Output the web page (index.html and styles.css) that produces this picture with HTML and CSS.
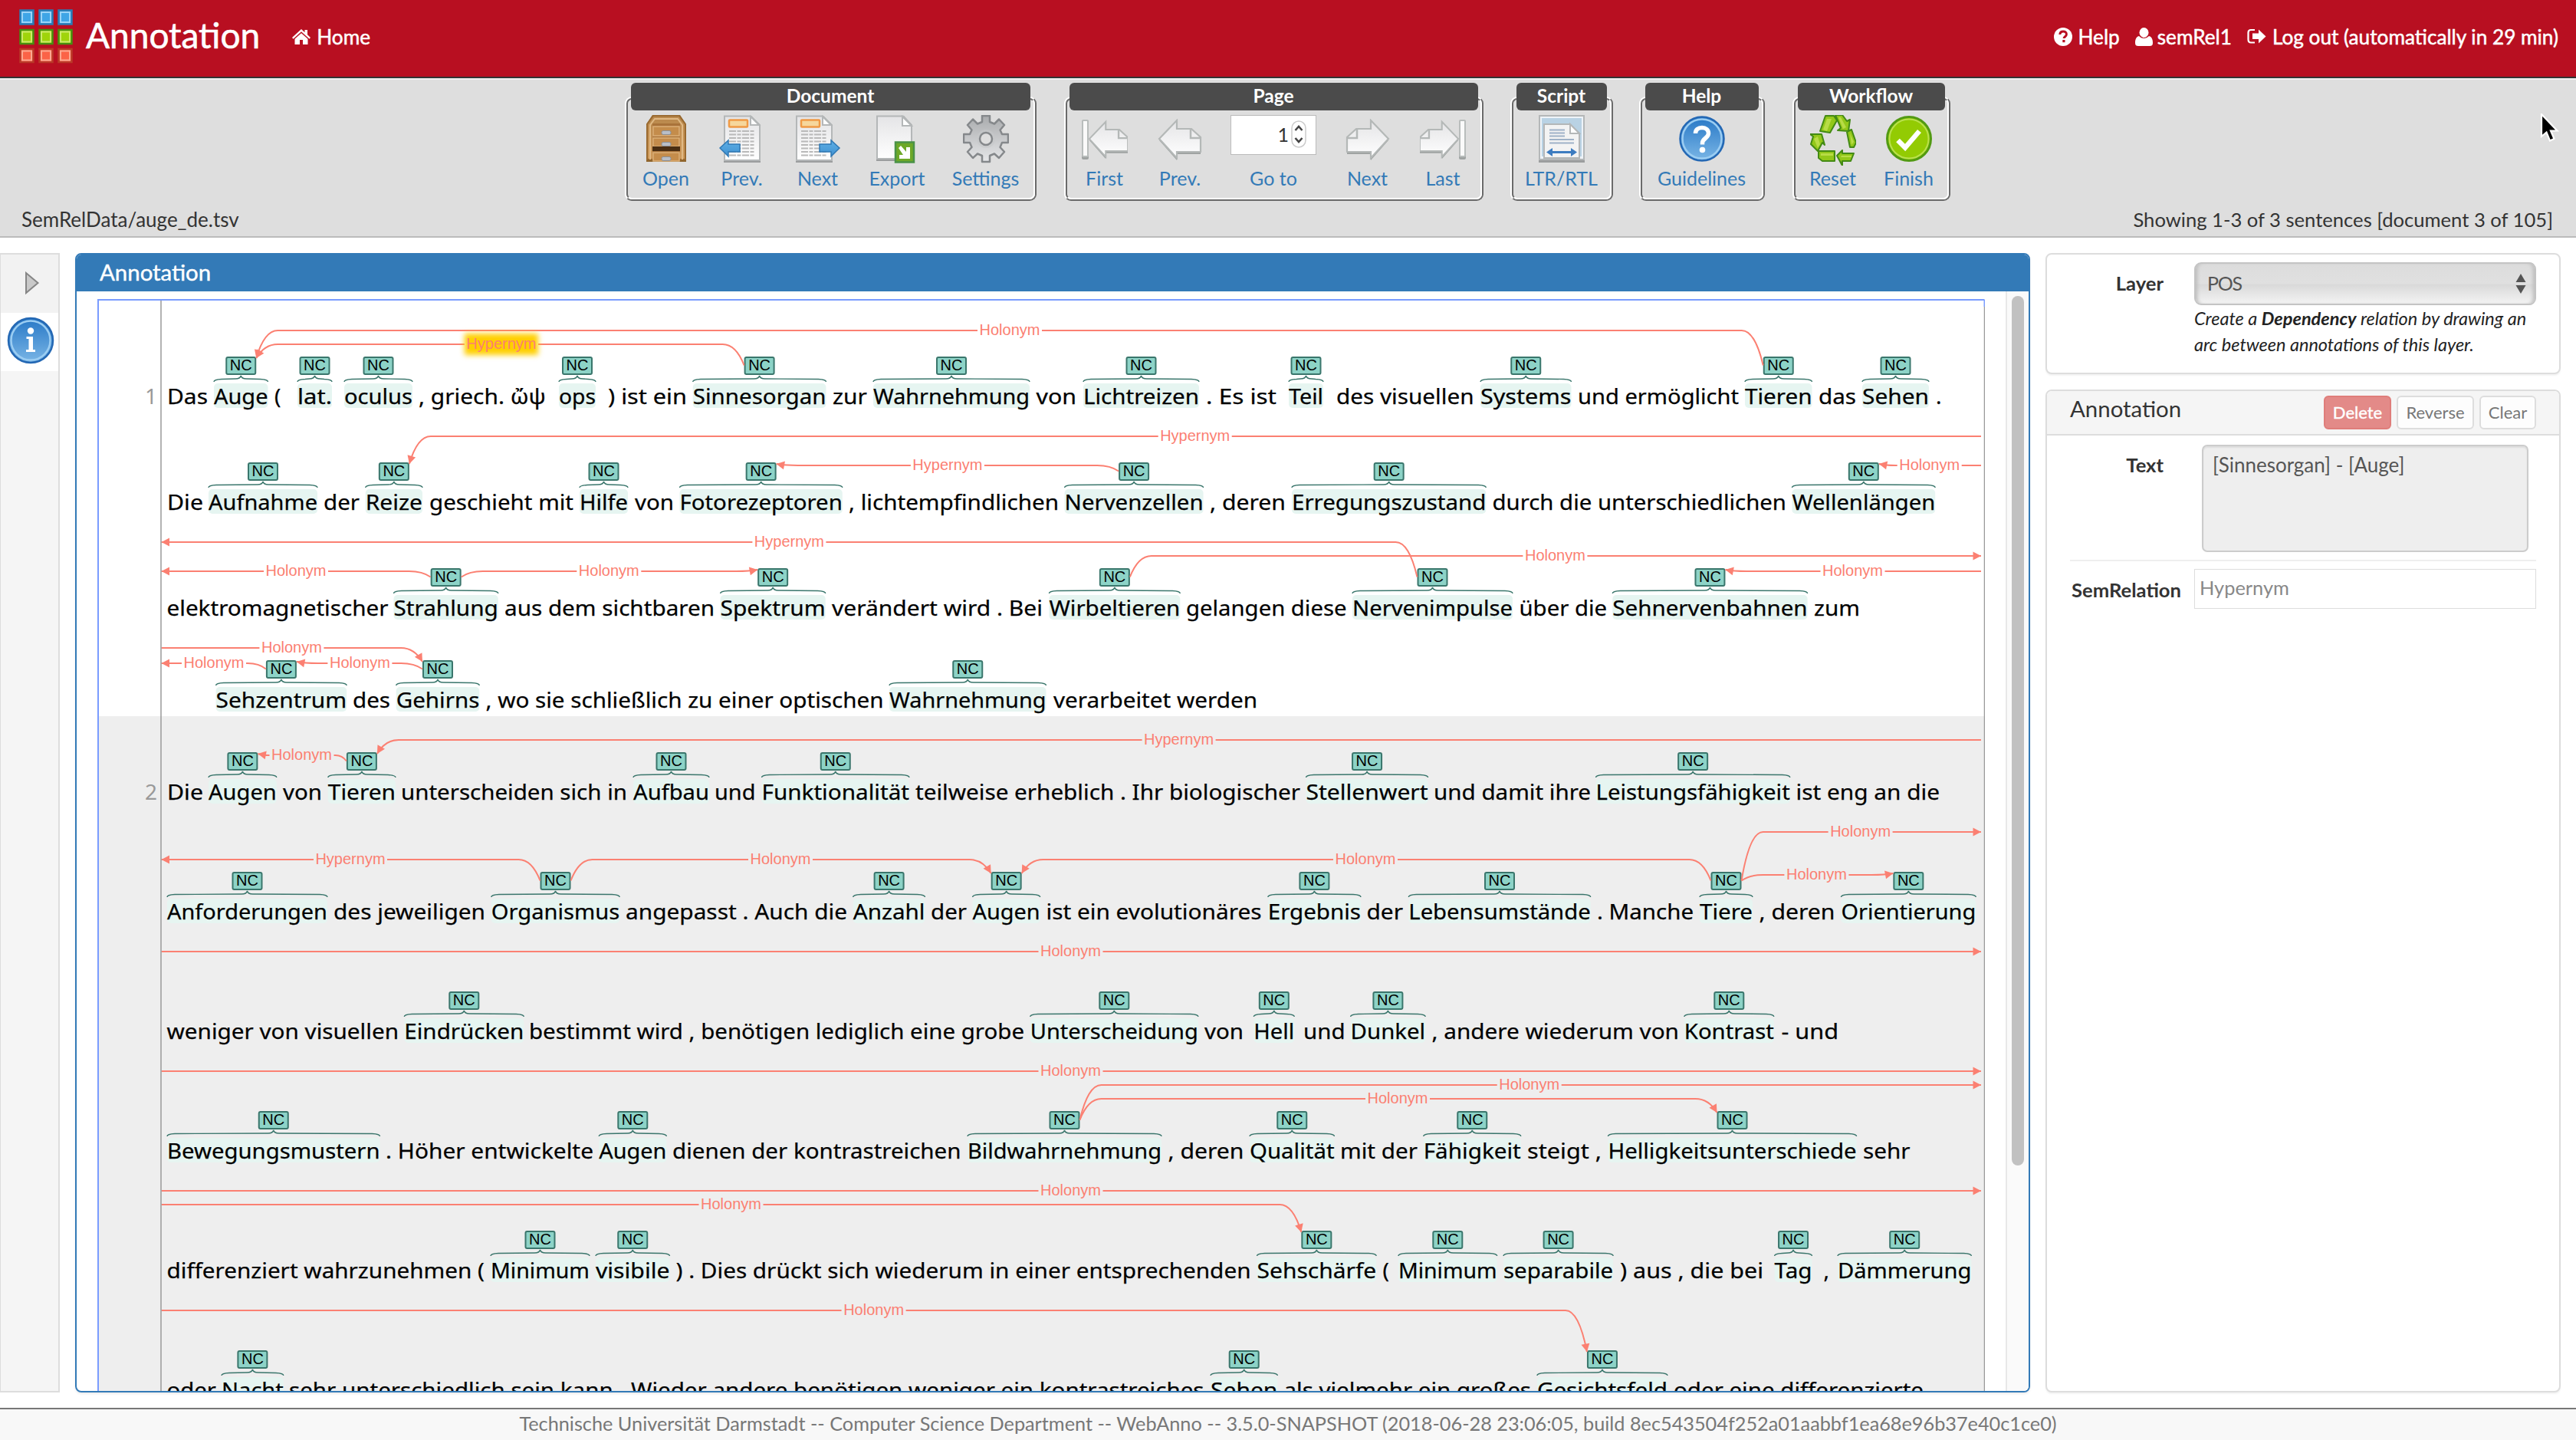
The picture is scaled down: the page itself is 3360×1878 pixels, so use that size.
FILE: index.html
```html
<!DOCTYPE html>
<html lang="en">
<head>
<meta charset="utf-8">
<title>WebAnno - Annotation</title>
<link rel="stylesheet" href="styles.css">
</head>
<body>
<svg class="defs" width="0" height="0" aria-hidden="true">
  <defs>
    <linearGradient id="gBlue" x1="0" y1="0" x2="0" y2="1"><stop offset="0" stop-color="#2878c6"/><stop offset="1" stop-color="#7ab6e6"/></linearGradient>
    <linearGradient id="gWood" x1="0" y1="0" x2="0" y2="1"><stop offset="0" stop-color="#b9884c"/><stop offset="1" stop-color="#cf9a5a"/></linearGradient>
    <linearGradient id="gPaper" x1="0" y1="0" x2="0" y2="1"><stop offset="0" stop-color="#e4e4e6"/><stop offset="1" stop-color="#ffffff"/></linearGradient>
    <linearGradient id="gGear" x1="0" y1="0" x2="0" y2="1"><stop offset="0" stop-color="#a9abad"/><stop offset="1" stop-color="#e6e7e9"/></linearGradient>
    <linearGradient id="gArrow" x1="0" y1="0" x2="0" y2="1"><stop offset="0" stop-color="#5fb0e6"/><stop offset="1" stop-color="#3f90d0"/></linearGradient>
    <symbol id="docText" viewBox="0 0 60 66">
      <path d="M6 62V1h36l12 12v49z" fill="#9b9d9e"/>
      <path d="M7 59V1.500h34l12 12V59z" fill="url(#gPaper)" stroke="#b4b7b8" stroke-width="2"/>
      <path d="M41 2v11h11z" fill="#fff" stroke="#b4b7b8" stroke-width="2"/>
      <rect x="13" y="6.500" width="24" height="9" rx="1" fill="#f6d79c" stroke="#f09a45" stroke-width="2.500"/>
      <path d="M13 21h34M13 25.500h34M13 30h34M13 34.500h34M13 39h34M13 43.500h34M13 48h34M13 52.500h34" stroke="#b9b9b9" stroke-width="2" stroke-dasharray="9 1.500 5 1.500"/>
    </symbol>
    <symbol id="pageArrow" viewBox="0 0 58 56">
      <path d="M2 28L25 3V14H44L56 26V46H25V54z" fill="#9fa3a2"/>
      <path d="M2 26L25 2V13H44L56 24V43H25V51z" fill="url(#gPaper)" stroke="#b4b8b7" stroke-width="2.200"/>
      <path d="M43 14V25H55" fill="none" stroke="#b4b8b7" stroke-width="2.500"/>
    </symbol>
  </defs>
</svg>

<header class="topbar">
  <div class="brand">
    <svg class="logo" viewBox="0 0 70 72" width="70" height="72">
      <g stroke-width="2.500">
        <g fill="#3fa5e6" stroke="#2a7cb5"><rect x="1.500" y="1.500" width="17" height="18"/><rect x="26.500" y="1.500" width="17" height="18"/><rect x="51.500" y="1.500" width="17" height="18"/></g>
        <g fill="#9fd40a" stroke="#478f10"><rect x="1.500" y="27" width="17" height="18"/><rect x="26.500" y="27" width="17" height="18"/><rect x="51.500" y="27" width="17" height="18"/></g>
        <g fill="#fb6347" stroke="#b93a28"><rect x="1.500" y="52" width="17" height="17"/><rect x="26.500" y="52" width="17" height="17"/><rect x="51.500" y="52" width="17" height="17"/></g>
      </g>
      <g fill="none" stroke-width="2">
        <g stroke="#9bd4f7"><rect x="4" y="4" width="12" height="13"/><rect x="29" y="4" width="12" height="13"/><rect x="54" y="4" width="12" height="13"/></g>
        <g stroke="#cdea6a"><rect x="4" y="29.500" width="12" height="13"/><rect x="29" y="29.500" width="12" height="13"/><rect x="54" y="29.500" width="12" height="13"/></g>
        <g stroke="#fca890"><rect x="4" y="54.500" width="12" height="12"/><rect x="29" y="54.500" width="12" height="12"/><rect x="54" y="54.500" width="12" height="12"/></g>
      </g>
    </svg>
    <h1 class="brand-title">Annotation</h1>
    <a class="nav home"><svg viewBox="0 0 26 22" width="26" height="22"><path d="M13 1L1 12l1.500 1.700L13 4.200l10.500 9.500L25 12l-4-3.700V2h-3.500v3.200z" fill="#fff"/><path d="M13 6.200L4.500 13.800V21H11v-6h4v6h6.500v-7.200z" fill="#fff"/></svg><span>Home</span></a>
  </div>
  <nav class="account">
    <a class="nav"><svg viewBox="0 0 24 24" width="24" height="24"><circle cx="12" cy="12" r="12" fill="#fff"/><path d="M7.800 9C8 6.200 10 5 12.200 5c2.300 0 4.200 1.400 4.200 3.700 0 3-3.300 3-3.300 5.300" fill="none" stroke="#b80f21" stroke-width="3"/><rect x="11.300" y="16" width="3.200" height="3.200" fill="#b80f21"/></svg><span>Help</span></a>
    <a class="nav nav-user"><svg viewBox="0 0 23 24" width="23" height="24"><ellipse cx="11.500" cy="6.500" rx="6" ry="6.500" fill="#fff"/><path d="M5 11c-4 1-5 5-5 9 0 3 1.500 4 4 4h15c2.500 0 4-1 4-4 0-4-1-8-5-9-4 4-9 4-13 0z" fill="#fff"/></svg><span>semRel1</span></a>
    <a class="nav nav-out"><svg viewBox="0 0 25 22" width="25" height="22"><path d="M10 2H5Q1.500 2 1.500 5.500v9Q1.500 18.500 5 18.500h5" fill="none" stroke="#fff" stroke-width="2.200"/><path d="M7 6.500h8V1.500l9.500 9-9.500 9V14H7z" fill="#fff"/></svg><span>Log out (automatically in 29 min)</span></a>
  </nav>
</header>

<section class="toolbar">
  <div class="groups">
    <div class="group g-doc"><div class="legend">Document</div><div class="items">
      <a class="item i98"><svg class="ico" viewBox="0 0 60 66"><path d="M4 61V12L12 0H48L56 12V61z" fill="#8f642c"/><path d="M5 58V12L13 1H47L55 12V58z" fill="url(#gWood)" stroke="#9a6a30" stroke-width="2"/><path d="M9 58V13L15 5H45L51 13V58" fill="none" stroke="#e0b985" stroke-width="2"/><path d="M12 11h36v47H12z" fill="#a9733a"/><path d="M13 15h34v12H13zM13 30h34v11H13zM13 49h34v11H13z" fill="#c48c4b" stroke="#dcb078" stroke-width="1.500"/><path d="M12 41h36v6H12z" fill="#4a2e12"/><g fill="#b9bec6" stroke="#8c8f94"><rect x="24" y="20.500" width="12" height="5" rx="2"/><rect x="24" y="35.500" width="12" height="5" rx="2"/><rect x="24" y="54.500" width="12" height="5" rx="2"/></g></svg><span>Open</span></a>
      <a class="item i100"><svg class="ico" viewBox="0 0 60 66"><use href="#docText" width="60" height="66"/><path d="M1 43L12 33v5H27v10H12v6z" fill="url(#gArrow)" stroke="#2f78b4" stroke-width="1.500"/></svg><span>Prev.</span></a>
      <a class="item i98"><svg class="ico" viewBox="0 0 60 66"><use href="#docText" x="-5" width="60" height="66"/><path d="M58 43L47 33v5H32v10H47v6z" fill="url(#gArrow)" stroke="#2f78b4" stroke-width="1.500"/></svg><span>Next</span></a>
      <a class="item i109"><svg class="ico" viewBox="0 0 60 66"><path d="M3 60V1h36l11 12v47z" fill="#9b9d9e"/><path d="M4 57V1.500h34l11 12V57z" fill="url(#gPaper)" stroke="#b4b7b8" stroke-width="2"/><path d="M37 2v12h12z" fill="#fff" stroke="#b4b7b8" stroke-width="2"/><rect x="28" y="35.500" width="24" height="26" fill="#6da828" stroke="#4a9247" stroke-width="2.500"/><path d="M32 43l3-3 7 8v-6h5v15H33v-5h5z" fill="#fff"/></svg><span>Export</span></a>
      <a class="item i122"><svg class="ico" viewBox="0 0 60 66"><g transform="translate(30 31)"><path d="M-5-30H5V-22L11-19.500 17-25.500 24-18 18.500-11.500 21-6H29V5H21L18.500 11 24 17 17 25 11 19.500 5 22V30H-5V22L-11 19.500-17 25-24 17-18.500 11-21 5H-29V-6H-21L-18.500-11.500-24-18-17-25.500-11-19.500-5-22z" fill="url(#gGear)" stroke="#85888b" stroke-width="2.500" stroke-linejoin="round"/><circle r="12" fill="#c6c8ca" opacity=".6"/><circle r="8" fill="#dedede" stroke="#85888b" stroke-width="2.500"/></g></svg><span>Settings</span></a>
    </div></div>
    <div class="group g-page"><div class="legend">Page</div><div class="items">
      <a class="item i97"><svg class="ico" viewBox="0 0 60 66"><rect x="0" y="7" width="9" height="51" rx="2" fill="#9fa3a2"/><rect x="1" y="7" width="7" height="47" rx="1" fill="#fafafa" stroke="#b9bdbc" stroke-width="2"/><use href="#pageArrow" x="8" y="5" width="54" height="56"/></svg><span>First</span></a>
      <a class="item i100"><svg class="ico" viewBox="0 0 60 66"><use href="#pageArrow" x="1" y="5" width="58" height="56"/></svg><span>Prev.</span></a>
      <div class="item i144"><div class="ico-slot"><div class="goto"><span>1</span><svg viewBox="0 0 20 36" width="20" height="36"><rect x="1" y="1" width="18" height="34" rx="9" fill="#fff" stroke="#ccc" stroke-width="1.500"/><path d="M5.500 13l4.500-5 4.500 5M5.500 23l4.500 5 4.500-5" fill="none" stroke="#444" stroke-width="2.600"/></svg></div></div><span>Go to</span></div>
      <a class="item i101"><svg class="ico" viewBox="0 0 60 66"><g transform="translate(59 5) scale(-1 1)"><use href="#pageArrow" width="58" height="56"/></g></svg><span>Next</span></a>
      <a class="item i96"><svg class="ico" viewBox="0 0 60 66"><rect x="51" y="7" width="9" height="51" rx="2" fill="#9fa3a2"/><rect x="52" y="7" width="7" height="47" rx="1" fill="#fafafa" stroke="#b9bdbc" stroke-width="2"/><g transform="translate(52 5) scale(-1 1)"><use href="#pageArrow" width="54" height="56"/></g></svg><span>Last</span></a>
    </div></div>
    <div class="group g-script"><div class="legend">Script</div><div class="items">
      <a class="item i126"><svg class="ico" viewBox="0 0 60 66"><rect x="0" y="1" width="60" height="61" fill="#9b9d9e"/><rect x="1" y="1" width="58" height="57" fill="#eef3f8" stroke="#b4b7b8" stroke-width="2"/><path d="M4 4h52v50H4z" fill="#b9d2e4"/><path d="M7 56V12h34l12 12v32z" fill="#f3f3f3" stroke="#b4b7b8" stroke-width="2"/><path d="M41 12v12h12z" fill="#fff" stroke="#b4b7b8" stroke-width="2"/><path d="M14 19.500h20M14 23.500h20M14 27.500h20M14 32h32M14 36.500h32" stroke="#9fb2c8" stroke-width="2"/><path d="M14 48.500h32" stroke="#3d7cc0" stroke-width="3"/><path d="M10 48.500l8-5.500v11zM50 48.500l-8-5.500v11z" fill="#3d7cc0"/></svg><span>LTR/RTL</span></a>
    </div></div>
    <div class="group g-help"><div class="legend">Help</div><div class="items">
      <a class="item i156"><svg class="ico" viewBox="0 0 60 66"><circle cx="30" cy="31" r="28.500" fill="url(#gBlue)" stroke="#2468b4" stroke-width="2.500"/><circle cx="30" cy="31" r="25.500" fill="none" stroke="#9bcdf2" stroke-width="2.500"/><path d="M21.500 24c0-5 3.500-7.500 8.500-7.500s8.500 3 8.500 7.500c0 6-8 6.500-8 12.500v2" fill="none" stroke="#fff" stroke-width="5.500"/><circle cx="30.500" cy="45.500" r="3.800" fill="#fff"/></svg><span>Guidelines</span></a>
    </div></div>
    <div class="group g-flow"><div class="legend">Workflow</div><div class="items">
      <a class="item i98"><svg class="ico" viewBox="0 0 60 66"><g transform="translate(30 33)"><path d="M-17-12L-10-32H1L5-26-4-10zM3-33H12L18-25 22-27 20-12 6-13 10-16zM18-11L24-14 30 3 27 9 22 9zM-30-8H-15L-11 6-14 3-20 14-29 5-26-5zM-19 14H2V27H-14L-19 23zM5 20L12 13V17H27L23 27H12V33z" fill="#93c81a" stroke="#438a14" stroke-width="2" stroke-linejoin="round"/><path d="M-13-14L-8-28H-2L-8-12zM7-30H10L17-17 13-15zM22-9L27 2 24 6zM-25-2L-20-5-17 5-20 10zM-16 17H0V20H-16zM11 20H24V22H10z" fill="#c4e356" opacity=".75"/></g></svg><span>Reset</span></a>
      <a class="item i100"><svg class="ico" viewBox="0 0 60 66"><circle cx="30" cy="31" r="28.500" fill="#93cb03" stroke="#529a12" stroke-width="3"/><circle cx="30" cy="31" r="25.500" fill="none" stroke="#b9e04e" stroke-width="2"/><path d="M15.500 33l9.500 9.500L43.500 21" fill="none" stroke="#fff" stroke-width="6.500"/></svg><span>Finish</span></a>
    </div></div>
  </div>
  <div class="status"><span class="t-doc">SemRelData/auge_de.tsv</span><span class="t-show">Showing 1-3 of 3 sentences [document 3 of 105]</span></div>
  <svg class="cursor" viewBox="0 0 26 38" width="26" height="38"><path d="M2 1V30L8.500 24.500 13 35.500 18.500 33 14 22.500H22.500z" fill="#000" stroke="#fff" stroke-width="2.200"/></svg>
</section>

<main class="work">
  <aside class="rail">
    <div class="rail-cell rail-toggle"><svg viewBox="0 0 20 32" width="20" height="32"><path d="M2 2L17.500 15 2 28z" fill="#c9c9c9" stroke="#868686" stroke-width="2"/></svg></div>
    <div class="rail-cell rail-info"><svg viewBox="0 0 62 62" width="62" height="62"><circle cx="31" cy="31" r="29" fill="url(#gBlue)" stroke="#2468b4" stroke-width="2.500"/><circle cx="31" cy="31" r="25.500" fill="none" stroke="#9bcdf2" stroke-width="2.500"/><circle cx="31" cy="18.500" r="4.200" fill="#fff"/><path d="M25.500 26H34V43h3v3H25v-3h3.500V29h-3z" fill="#fff"/></svg></div>
  </aside>
  <section class="panel-main">
    <h2 class="panel-title">Annotation</h2>
    <div class="scroll">
      <svg class="doc" id="doc" viewBox="127 390 2462 1424" width="2462" height="1424"></svg>
      <div class="track"><div class="thumb"></div></div>
    </div>
  </section>
  <aside class="side">
    <section class="card layer">
      <label class="lbl">Layer</label>
      <div class="layer-body">
        <div class="select"><span class="value">POS</span><svg viewBox="0 0 14 26" width="14" height="26"><path d="M7 0l6.500 11H.5zM7 26l6.500-11H.5z" fill="#555"/></svg></div>
        <p class="hint">Create a <b>Dependency</b> relation by drawing an<br>arc between annotations of this layer.</p>
      </div>
    </section>
    <section class="card detail">
      <div class="detail-head"><h3>Annotation</h3><div class="btns"><button class="btn danger">Delete</button><button class="btn rev">Reverse</button><button class="btn clr">Clear</button></div></div>
      <div class="detail-row"><label class="lbl">Text</label><div class="area">[Sinnesorgan] - [Auge]</div></div>
      <hr class="rule">
      <div class="detail-row rel"><label class="lbl">SemRelation</label><div class="field">Hypernym</div></div>
    </section>
  </aside>
</main>

<footer class="foot"><span>Technische Universität Darmstadt -- Computer Science Department -- WebAnno -- 3.5.0-SNAPSHOT (2018-06-28 23:06:05, build 8ec543504f252a01aabbf1ea68e96b37e40c1ce0)</span></footer>
<script src="doc.js"></script>
</body>
</html>
```
FILE: styles.css
```css
* { box-sizing: border-box; }
html, body { margin: 0; height: 1878px; overflow: hidden; }
body { width: 3360px; background: #fff; color: #333; font-family: Lato, "Open Sans", sans-serif; font-size: 25px; display: flex; flex-direction: column; position: relative; }
h1, h2, h3, p { margin: 0; font-weight: 400; }
svg { display: block; flex: none; }
span { white-space: nowrap; }
.defs { position: absolute; }

.topbar { height: 102px; flex: none; background: #b80f21; border-bottom: 2px solid #333; display: flex; justify-content: space-between; color: #fff; padding: 0 23px 0 25px; }
.brand, .account { display: flex; align-items: center; height: 96px; }
.brand-title { font-size: 46px; margin: 0 0 4px 17px; line-height: 60px; -webkit-text-stroke: .6px #fff; }
.nav { display: flex; align-items: center; gap: 7px; line-height: 32px; font-size: 26.200px; -webkit-text-stroke: .5px #fff; }
.home { margin-left: 41px; }
.nav-user { margin-left: 20px; gap: 6px; }
.nav-out { margin-left: 20px; gap: 8px; }

.toolbar { height: 208px; flex: none; background: #dedede; border-top: 2px solid #f0f0f0; border-bottom: 2px solid #bbb; position: relative; display: flex; flex-direction: column; align-items: center; }
.groups { display: flex; justify-content: center; padding: 4px 2px 0 0; height: 164px; }
.group { height: 154px; position: relative; display: flex; flex-direction: column; align-items: center; }
.group::before { content: ""; position: absolute; inset: 18px 0 0 0; border-radius: 9px; border: 2px solid; border-color: #fff #6a6a6a #6a6a6a #fff; }
.group::after { content: ""; position: absolute; inset: 20px 2px 2px 2px; border-radius: 7px; border: 2px solid; border-color: #6a6a6a #fff #fff #6a6a6a; }
.legend { position: relative; z-index: 1; height: 36px; flex: none; border-radius: 6px; background: #4b4b4b; color: #fff; font-weight: 700; font-size: 24.500px; line-height: 34px; text-align: center; }
.g-doc { width: 537px; margin-right: 36px; }
.g-doc .legend { width: 521px; }
.g-page { width: 547px; margin-right: 35px; }
.g-page .legend { width: 533px; }
.g-script { width: 134px; margin-right: 34px; }
.g-script .legend { width: 118px; }
.g-help { width: 164px; margin-right: 36px; }
.g-help .legend { width: 148px; }
.g-flow { width: 206px; }
.g-flow .legend { width: 192px; }
.items { display: flex; padding: 6px 0 0; justify-content: center; }
.item { display: flex; flex-direction: column; align-items: center; color: #337ab7; line-height: 36px; position: relative; z-index: 1; }
.ico { width: 60px; height: 66px; margin-bottom: -2px; }
.ico-slot { height: 64px; }
.i96 { width: 96px; } .i97 { width: 97px; } .i98 { width: 98px; } .i100 { width: 100px; } .i101 { width: 101px; }
.i109 { width: 109px; } .i122 { width: 122px; } .i126 { width: 126px; } .i144 { width: 144px; } .i156 { width: 156px; }
.goto { width: 112px; height: 52px; border: 1px solid #bbb; background: #fff; display: flex; justify-content: flex-end; align-items: center; gap: 3px; padding: 0 12px 2px 0; color: #333; }
.status { width: 100%; display: flex; justify-content: space-between; padding: 0 30px 0 28px; line-height: 36px; }
.t-doc { font-size: 26px; }
.t-show { font-size: 25.600px; }
.cursor { position: absolute; left: 3313px; top: 44px; }

.work { height: 1506px; flex: none; display: flex; padding-top: 20px; }
.rail { width: 78px; height: 1486px; border: 2px solid #ddd; border-left-width: 1px; background: #f5f5f5; margin-right: 20px; flex: none; }
.rail-cell { display: flex; align-items: center; justify-content: center; height: 76px; }
.rail-toggle { background: #f2f2f2; padding-left: 6px; }
.rail-info { background: #fff; padding: 0 0 4px 2px; }
.panel-main { width: 2550px; height: 1486px; border: 2px solid #337ab7; border-radius: 8px; flex: none; overflow: hidden; box-shadow: 0 2px 3px rgba(0,0,0,.08); }
.panel-title { height: 48px; background: #337ab7; color: #fff; font-size: 29.400px; line-height: 46px; padding-left: 30px; -webkit-text-stroke: .4px #fff; }
.scroll { height: 1434px; display: flex; justify-content: space-between; padding-left: 27px; }
.doc { margin-top: 10px; }
.track { width: 30px; border-left: 2px solid #e8e8e8; background: #fafafa; padding: 6px 0 0 6px; }
.thumb { width: 16px; height: 1134px; border-radius: 8px; background: #c1c1c1; }

.side { width: 672px; margin-left: 20px; display: flex; flex-direction: column; gap: 20px; }
.card { border: 2px solid #ddd; border-radius: 8px; background: #fff; box-shadow: 0 2px 2px rgba(0,0,0,.05); }
.layer { height: 158px; display: flex; padding: 10px 30px 0 30px; }
.lbl { font-weight: 700; font-size: 25.600px; text-align: right; white-space: nowrap; }
.layer .lbl { width: 122px; line-height: 54px; }
.layer-body { margin-left: 40px; width: 446px; flex: none; }
.select { height: 56px; border: 2px solid #c4c4c4; border-radius: 9px; background: linear-gradient(#dcdcdc, #e0e0e0 50%, #d9d9d9 52%, #f3f3f3); box-shadow: inset 5px 0 5px -3px #bbb, inset -5px 0 5px -3px #bbb; display: flex; align-items: center; justify-content: space-between; padding: 0 11px 0 15px; color: #555; line-height: 32px; }
.value { letter-spacing: -1.300px; padding-bottom: 3px; }
.hint { font-style: italic; font-size: 23.500px; line-height: 34px; color: #222; white-space: nowrap; }
.detail { height: 1308px; overflow: hidden; }
.detail-head { height: 58px; background: #f5f5f5; border-bottom: 2px solid #ddd; display: flex; justify-content: space-between; padding: 6px 30px 0 30px; }
.detail-head h3 { font-size: 29.400px; line-height: 40px; margin-top: -3px; }
.btns { display: flex; gap: 7px; }
.btn { height: 44px; border: 2px solid #ddd; border-radius: 6px; background: #fdfdfd; color: #777; font: 22px Lato, sans-serif; padding: 0 0 2px; text-align: center; }
.danger { width: 88px; background: #e38a88; border-color: #df7d7a; color: #fff; -webkit-text-stroke: .4px #fff; }
.rev { width: 101px; }
.clr { width: 74px; }
.detail-row { display: flex; padding: 12px 30px 0; }
.detail-row .lbl { width: 122px; line-height: 52px; }
.area { margin-left: 50px; width: 426px; height: 140px; border: 2px solid #ccc; border-radius: 7px; background: #eee; box-shadow: inset 0 2px 2px rgba(0,0,0,.07); color: #555; padding: 0 12px; font-size: 26px; line-height: 49px; }
.rule { margin: 10px 30px 0; border: 0; height: 2px; background: #eee; }
.rel { padding-top: 10px; }
.detail-row.rel .lbl { width: 145px; line-height: 54px; }
.field { margin-left: 17px; width: 446px; height: 52px; border: 1px solid #ddd; color: #888; font-size: 25.400px; line-height: 47px; padding-left: 6px; }

.foot { margin-top: 20px; height: 42px; flex: none; border-top: 2px solid #777; background: #f8f8f8; color: #777; text-align: center; font-size: 25.270px; line-height: 36px; }

.word { font: 28px "Noto Sans", "Open Sans", sans-serif; fill: #000; stroke: #000; stroke-width: .25; }
.num { font: 28px "Noto Sans", "Open Sans", sans-serif; fill: #999; }
.mark { fill: #e6f5f1; }
.brace { fill: none; stroke: #3a766c; stroke-width: 1.4; }
.tag { fill: #8dd3c7; stroke: #3a766c; stroke-width: 2; }
.tag-text { font: 20px "Liberation Sans", Arial, sans-serif; fill: #000; text-anchor: middle; }
.arc { fill: none; stroke: #fb8072; stroke-width: 2; }
.head { fill: #fb8072; }
.arc-text { font: 20px "Liberation Sans", Arial, sans-serif; fill: #fb8072; text-anchor: middle; }
```
FILE: doc.js
```js
// Rows of the document. Runs are [text, start, end, annotated]; arcs are
// [label, height, label centre, from, to], where an end is [span index, side]
// or the name of the edge at which the arc leaves the row.
const LEFT = 210.5, RIGHT = 2584;
const rows = [
  { base: 526, bottom: 538, num: "1", runs: [
    ["Das",218,271],["Auge",279,349.5,1],["(",358,368],["lat.",388,433,1],["oculus",449,538,1],[", griech. ὤψ",546,712],["ops",729,777,1],[") ist ein",793,896],["Sinnesorgan",903.7,1077.5,1],["zur",1086,1131],["Wahrnehmung",1139,1343,1],["von",1351.500,1404],["Lichtreizen",1413,1564,1],[". Es ist",1573,1665],["Teil",1681,1726,1],["des visuellen",1743,1922.5],["Systems",1931,2049.5,1],["und ermöglicht",2058,2268],["Tieren",2276,2363.5,1],["das",2372,2421],["Sehen",2429,2516,1],[".",2525,2532]],
    arcs: [["Holonym",431,1317,[9,"l"],[0,"r"]],["Hypernym",449,653.900,[4,"l"],[0,"r"],1]] },
  { base: 664, bottom: 676, runs: [
    ["Die",218,265],["Aufnahme",272,414,1],["der",422,469],["Reize",476.7,551,1],["geschieht mit",560,748],["Hilfe",756,819,1],["von",828,879],["Fotorezeptoren",886.5,1098.8,1],[", lichtempfindlichen",1107,1381],["Nervenzellen",1388.6,1569.6,1],[", deren",1578,1677],["Erregungszustand",1685,1938.3,1],["durch die unterschiedlichen",1946.5,2330],["Wellenlängen",2337.4,2524.2,1]],
    arcs: [["Hypernym",569,1558.7,"R",[1,"r"]],["Hypernym",607,1235.9,[4,"l"],[3,"r"]],["Holonym",607,2516.7,"R",[6,"r"]]] },
  { base: 802, bottom: 814, runs: [
    ["elektromagnetischer",217.5,506.5],["Strahlung",513.5,649.8,1],["aus dem sichtbaren",658,932],["Spektrum",939.6,1076.7,1],["verändert wird . Bei",1085,1360],["Wirbeltieren",1368.4,1539.3,1],["gelangen diese",1547,1756.5],["Nervenimpulse",1764,1973,1],["über die",1981.5,2096],["Sehnervenbahnen",2103.3,2357.6,1],["zum",2366,2426]],
    arcs: [["Hypernym",707,1029.4,[3,"l"],"L"],["Holonym",725,2028.4,[2,"r"],"R"],["Holonym",745,386,[0,"l"],"L"],["Holonym",745,794.3,[0,"r"],[1,"l"]],["Holonym",745,2416.5,"R",[4,"r"]]] },
  { base: 922, bottom: 934, runs: [
    ["Sehzentrum",281.6,452.2,1],["des",460,509],["Gehirns",516.7,625.3,1],[", wo sie schließlich zu einer optischen",633.5,1152.5],["Wahrnehmung",1160,1364.5,1],["verarbeitet werden",1374,1640]],
    arcs: [["Holonym",845,380.4,"L",[1,"l"]],["Holonym",865,279,[0,"l"],"L"],["Holonym",865,469.4,[1,"l"],[0,"r"]]] },
  { base: 1042, bottom: 1054, shade: 1, num: "2", runs: [
    ["Die",218,265],["Augen",272,360.8,1],["von",369,420],["Tieren",427.8,516,1],["unterscheiden sich in",523,818],["Aufbau",826,925,1],["und",932,985.5],["Funktionalität",993.5,1186,1],["teilweise erheblich . Ihr biologischer",1194,1696],["Stellenwert",1703.5,1862.6,1],["und damit ihre",1870,2075],["Leistungsfähigkeit",2081.5,2334.8,1],["ist eng an die",2342.5,2530]],
    arcs: [["Hypernym",965,1537.6,"R",[1,"r"]],["Holonym",985,393.5,[1,"l"],[0,"r"]]] },
  { base: 1198, bottom: 1210, shade: 1, runs: [
    ["Anforderungen",218,427,1],["des jeweiligen",435,633],["Organismus",640.8,808.2,1],["angepasst . Auch die",816,1105],["Anzahl",1112.7,1206.5,1],["der",1214,1261],["Augen",1268.6,1356.7,1],["ist ein evolutionäres",1364.5,1645.5],["Ergebnis",1653.8,1775,1],["der",1782.5,1830],["Lebensumstände",1837.3,2074.7,1],[". Manche",2083,2209],["Tiere",2217,2286,1],[", deren",2294.5,2393.5],["Orientierung",2401.4,2577.3,1]],
    arcs: [["Hypernym",1121,457,[1,"l"],"L"],["Holonym",1121,1018,[1,"r"],[3,"l"]],["Holonym",1121,1781,[6,"l"],[3,"r"]],["Holonym",1085,2426.6,[6,"r"],"R"],["Holonym",1141,2369.4,[6,"r"],[7,"l"]]] },
  { base: 1354, bottom: 1366, shade: 1, runs: [
    ["weniger von visuellen",217.5,520],["Eindrücken",527.3,683.3,1],["bestimmt wird , benötigen lediglich eine grobe",690,1336],["Unterscheidung",1343.7,1562.9,1],["von",1571,1622],["Hell",1635.3,1688.3,1],["und",1700,1754.5],["Dunkel",1761.6,1859.2,1],[", andere wiederum von",1867.5,2190],["Kontrast",2196.8,2313.8,1],["- und",2323.5,2398]],
    arcs: [["Holonym",1241,1396.5,"L","R"]] },
  { base: 1510, bottom: 1522, shade: 1, runs: [
    ["Bewegungsmustern",218,495.5,1],[". Höher entwickelte",503,774],["Augen",781.2,869.4,1],["dienen der kontrastreichen",877,1253.5],["Bildwahrnehmung",1262,1515,1],[", deren",1523.5,1622.5],["Qualität",1630,1740.5,1],["mit der",1748,1849],["Fähigkeit",1856.7,1983.8,1],["steigt ,",1992,2089],["Helligkeitsunterschiede",2097.4,2421.6,1],["sehr",2430,2491.5]],
    arcs: [["Holonym",1397,1396.5,"L","R"],["Holonym",1415,1994.7,[2,"r"],"R"],["Holonym",1433,1823,[2,"r"],[5,"l"]]] },
  { base: 1666, bottom: 1678, shade: 1, runs: [
    ["differenziert wahrzunehmen (",217.5,632],["Minimum",640,769,1],["visibile",777,873.5,1],[") . Dies drückt sich wiederum in einer entsprechenden",881.5,1631.5],["Sehschärfe",1639.5,1795.2,1],["(",1803.500,1815],["Minimum",1823.9,1952.7,1],["separabile",1961,2104.2,1],[") aus , die bei",2113,2300],["Tag",2314.6,2363.5,1],[",",2378.500,2386],["Dämmerung",2397,2571.4,1]],
    arcs: [["Holonym",1553,1396.5,"L","R"],["Holonym",1571,953.5,"L",[2,"l"]]] },
  { base: 1822, bottom: 1834, shade: 1, runs: [
    ["oder",217.5,282],["Nacht",289,369.8,1],["sehr unterschiedlich sein kann . Wieder andere benötigen weniger ein kontrastreiches",377,1570.5],["Sehen",1579,1666.4,1],["als vielmehr ein großes",1674.5,1997],["Gesichtsfeld",2004.9,2175,1],["oder eine differenzierte",2183,2509]],
    arcs: [["Holonym",1709,1139.6,"L",[2,"l"]]] }
];

const svg = document.getElementById("doc");
function add(name, attrs, text) {
  const el = document.createElementNS("http://www.w3.org/2000/svg", name);
  for (const k in attrs) el.setAttribute(k, attrs[k]);
  if (text) el.textContent = text;
  svg.appendChild(el);
  return el;
}

svg.innerHTML = '<filter id="glow" x="-20%" y="-40%" width="140%" height="180%"><feGaussianBlur stdDeviation="3.5"/></filter>';

function arrow(x, y, angle) {
  add("path", { class: "head", d: "M0 0L-10.500-5.500V5.500z", transform: `translate(${x} ${y}) rotate(${angle})` });
}

function drawArc(row, boxes, [label, y, mid, from, to, selected]) {
  const half = label === "Hypernym" ? 48 : 42;
  const boxTop = row.base - 61;
  const end = (e, isTarget) => {
    if (e === "L") return { x: LEFT, edge: -1 };
    if (e === "R") return { x: RIGHT, edge: 1 };
    const c = boxes[e[0]], s = e[1] === "r" ? 1 : -1;
    return { x: c + s * 20, y: isTarget ? boxTop + 2 : boxTop + 11.5, s };
  };
  const piece = p => {
    if (p.edge) return `M${p.x} ${y}`;
    const reach = Math.min(28, Math.abs(mid - p.x) - half - 2);
    return `M${p.x} ${p.y}Q${p.x + p.s * reach * .38} ${y} ${p.x + p.s * Math.max(reach, 4)} ${y}`;
  };
  const a = end(from, false), b = end(to, true);
  for (const p of [a, b]) add("path", { class: "arc", d: piece(p) + `H${p.x < mid ? mid - half : mid + half}` });
  if (b.edge) arrow(b.x, y, b.edge > 0 ? 0 : 180);
  else arrow(b.x, b.y, Math.atan2(b.y - y, -b.s * 28 * .38) * 180 / Math.PI);
  if (selected) add("rect", { x: mid - 48, y: y - 14, width: 96, height: 28, fill: "#ffcf00", filter: "url(#glow)" });
  add("text", { class: "arc-text", x: mid, y: y + 6 }, label);
}

let top0 = 392;
for (const row of rows) {
  if (row.shade) {
    add("rect", { x: 128, y: top0, width: 2460, height: row.bottom - top0, fill: "#eee" });
    add("rect", { x: 128, y: row.bottom, width: 2460, height: 1, fill: "#f4f4f4" });
  }
  top0 = row.bottom;
}
for (const row of rows) {
  const B = row.base, boxes = [];
  for (const [text, x0, x1, note] of row.runs) {
    if (note) {
      const c = (x0 + x1) / 2, t = B - 36;
      boxes.push(c);
      add("rect", { class: "mark", x: x0, y: B - 26, width: x1 - x0, height: 32, rx: 5 });
      add("path", { class: "brace", d: `M${x0} ${t + 8}Q${x0} ${t + 5} ${x0 + 10} ${t + 4.500}L${c - 7} ${t + 4}Q${c - 1} ${t + 4} ${c} ${t}Q${c + 1} ${t + 4} ${c + 7} ${t + 4}L${x1 - 10} ${t + 4.500}Q${x1} ${t + 5} ${x1} ${t + 8}` });
      add("rect", { class: "tag", x: c - 19, y: B - 60, width: 38, height: 22, rx: 2 });
      add("text", { class: "tag-text", x: c, y: B - 43 }, "NC");
    }
    const a = { class: "word", x: x0, y: B + .5 };
    if (text.length > 1) { a.textLength = x1 - x0; a.lengthAdjust = "spacingAndGlyphs"; }
    add("text", a, text);
  }
  for (const arc of row.arcs) drawArc(row, boxes, arc);
  if (row.num) add("text", { class: "num", x: 189, y: B + .5 }, row.num);
}

// Frame and gutter line
add("path", { d: "M127 391H2588.500M128 390V1814M2588.500 391V400", fill: "none", stroke: "#7a9cff", "stroke-width": 2 });
add("path", { d: "M210 392V1814M2588.500 400V1814", fill: "none", stroke: "#999", "stroke-width": 1.500 });
```
